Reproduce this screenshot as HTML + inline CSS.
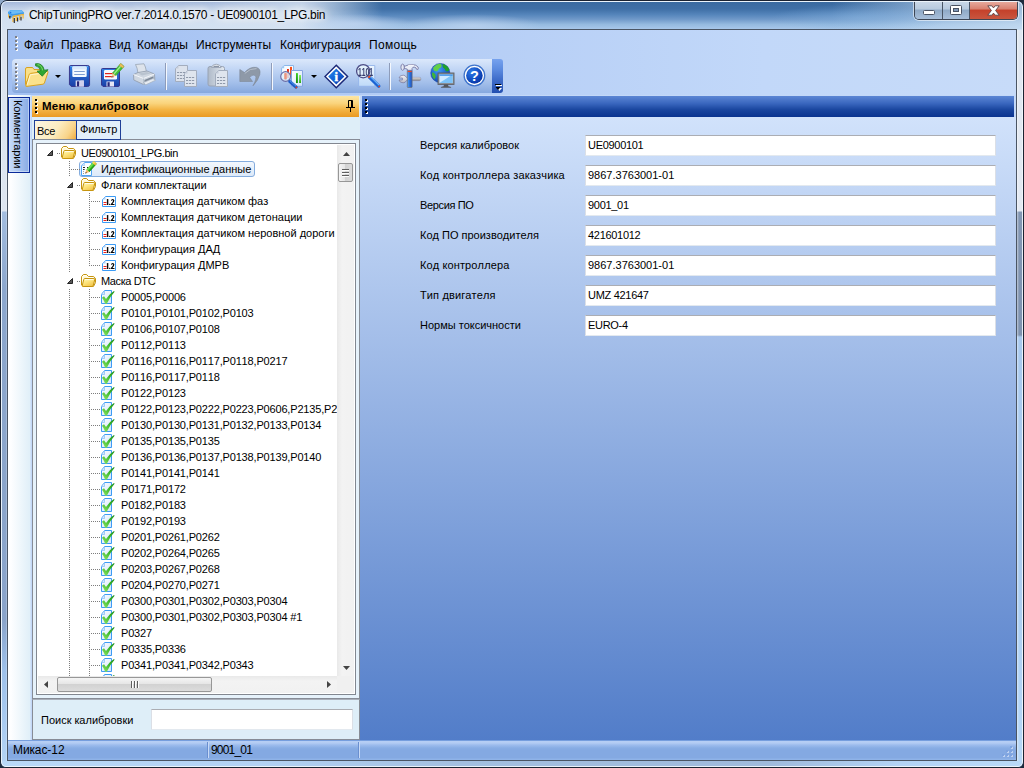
<!DOCTYPE html>
<html lang="ru">
<head>
<meta charset="utf-8">
<title>ChipTuningPRO ver.7.2014.0.1570 - UE0900101_LPG.bin</title>
<style>
*{box-sizing:border-box;margin:0;padding:0}
html,body{width:1024px;height:768px;overflow:hidden;background:#1d2a3d}
body{position:relative;font-kerning:none;font-family:"Liberation Sans","DejaVu Sans",sans-serif;font-size:11px;color:#000}
.abs{position:absolute}
#win{position:absolute;left:0;top:0;width:1024px;height:768px;border-radius:7px 7px 6px 6px;background:#a9c6ea;border:1px solid #1b2332;overflow:hidden}
#win:before{content:"";position:absolute;left:0;top:0;right:0;bottom:0;border:1px solid rgba(240,246,252,.92);border-radius:6px 6px 5px 5px;z-index:5;pointer-events:none}
#glass{position:absolute;left:1px;top:1px;width:1020px;height:28px;background:
 radial-gradient(ellipse 60px 10px at 352px 22px,rgba(190,212,240,.8),rgba(190,212,240,0)),
 radial-gradient(ellipse 70px 12px at 470px 24px,rgba(190,212,240,.75),rgba(190,212,240,0)),
 radial-gradient(ellipse 90px 14px at 860px 16px,rgba(130,175,220,.6),rgba(130,175,220,0)),
 linear-gradient(90deg,rgba(214,227,242,.96) 0,rgba(214,227,242,.95) 300px,rgba(214,227,242,.55) 335px,rgba(214,227,242,0) 380px),
 linear-gradient(90deg,rgba(190,215,240,0) 830px,rgba(190,215,240,.5) 915px,rgba(205,225,244,.7) 1020px),
 linear-gradient(180deg,#3a6aa0 0,#3f6fa6 25%,#5585bb 45%,#7099c9 62%,#95badf 80%,#a7c7ea 96%,#dce8f6 100%)}
#glassL{position:absolute;left:1px;top:1px;width:345px;height:10px;background:linear-gradient(180deg,rgba(150,172,212,.75),rgba(150,172,212,.45) 40%,rgba(150,172,212,0));-webkit-mask-image:linear-gradient(90deg,#000 0,#000 60%,transparent 100%);mask-image:linear-gradient(90deg,#000 0,#000 60%,transparent 100%)}
#cornTL{position:absolute;left:0;top:0;width:8px;height:8px;background:#8fa9c9}
#sideL{position:absolute;left:1px;top:29px;width:6px;height:731px;background:linear-gradient(90deg,rgba(255,255,255,0) 0,rgba(255,255,255,0) 4px,rgba(255,255,255,.45) 5px),linear-gradient(180deg,#dce4ef 0,#dde5f0 181px,#a3bddf 182px,#8ca7cd 260px,#8aa4ca 590px,#9dc0ea 640px,#b3d3f5 100%)}
#sideR{position:absolute;left:1016px;top:29px;width:6px;height:731px;background:linear-gradient(90deg,rgba(255,255,255,.5) 0,rgba(255,255,255,0) 2px),linear-gradient(180deg,#dfe7f1 0,#e3e9f2 181px,#8397b4 182px,#7f93b0 305px,#a9c9ee 307px,#aecff2 80%,#b7d7f7 100%)}
#botF{position:absolute;left:1px;top:760px;width:1020px;height:6px;background:linear-gradient(90deg,#b9d8f7,#b3d2f4 25%,#a3bfe0 45%,#9fbadc 75%,#b3d3f5 88%,#b9d9f8)}
#title{position:absolute;left:28px;top:6px;font-size:12px;letter-spacing:-.3px;line-height:16px;white-space:nowrap;color:#000;text-shadow:0 0 6px #fff,0 0 9px #fff,0 0 12px rgba(255,255,255,.9)}
#client{position:absolute;left:6px;top:28px;width:1010px;height:732px;border:1px solid #4a5564;background:#bdd2f4;overflow:hidden}
/* caption buttons */
#cap{position:absolute;left:913px;top:0;width:104px;height:19px;border:1px solid #3d4654;border-top:none;border-radius:0 0 5px 5px;overflow:hidden;box-shadow:0 0 0 1px rgba(255,255,255,.55)}
#cap div{position:absolute;top:0;height:18px}
#cmin{left:0;width:28px;background:linear-gradient(180deg,#cbd9e8 0%,#b7cade 45%,#8fa9c6 50%,#a9c0da 100%);border-right:1px solid #4a5666}
#cmax{left:28px;width:27px;background:linear-gradient(180deg,#cbd9e8 0%,#b7cade 45%,#8fa9c6 50%,#a9c0da 100%);border-right:1px solid #4a5666}
#ccls{left:55px;width:47px;background:linear-gradient(180deg,#e9aea2 0%,#d9806f 45%,#c4402a 50%,#c9563f 100%)}
/* menu */
#menu{position:absolute;left:0;top:0;width:1008px;height:29px;background:linear-gradient(90deg,#a2c0f2 0%,#b3ccf5 40%,#c2d8f9 75%,#c7dbf9 100%)}
#menu span{position:absolute;top:7px;font-size:12px;line-height:16px;white-space:nowrap;color:#000}
.grip{position:absolute;width:3px}
/* toolbar */
#tbrow{position:absolute;left:0;top:29px;width:1008px;height:36px;background:linear-gradient(90deg,#a2c0f2 0%,#b3ccf5 40%,#c2d8f9 75%,#c7dbf9 100%)}
#tb{position:absolute;left:4px;top:0px;width:483px;height:34px;border-radius:4px 0 0 4px;background:linear-gradient(180deg,#dbe8fb 0%,#c2d6f5 30%,#a3bfea 70%,#86a8de 100%)}
#tbend{position:absolute;left:484px;top:0;width:11px;height:34px;border-radius:0 3px 3px 0;background:linear-gradient(180deg,#76a2ee 0%,#5c8be0 30%,#3f6dca 60%,#234fb0 100%)}
.tsep{position:absolute;top:4px;width:2px;height:27px;border-left:1px solid #8e9cba;border-right:1px solid #f4f8fe}
.ti{position:absolute;top:5px;width:24px;height:24px}
.dd{position:absolute;width:0;height:0;border-left:3px solid transparent;border-right:3px solid transparent;border-top:3px solid #000}
/* dock */
#dock{position:absolute;left:0;top:65px;width:1008px;height:645px;background:#c3d8f8}
#lstrip{position:absolute;left:0;top:0;width:24px;height:645px;background:linear-gradient(90deg,#ffffff 0,#fdfeff 3px,#e0eff8 22px,#c3d8f8 23px,#c3d8f8 24px)}
#ctab{position:absolute;left:0px;top:2px;width:22px;height:76px;border:1px solid #0a2a9a;background:linear-gradient(90deg,#c9dcf8,#a9c4ee 50%,#88abe4);box-shadow:inset 0 0 0 1px rgba(225,236,252,.55)}
#ctab span{position:absolute;left:16px;top:2px;font-size:11px;white-space:nowrap;transform-origin:0 0;transform:rotate(90deg);line-height:14px;letter-spacing:-.1px}
#panel{position:absolute;left:24px;top:1px;width:328px;height:644px;background:#deeef8}
#phead{position:absolute;left:0;top:0;width:327px;height:21px;background:linear-gradient(180deg,#fce6a4 0%,#fad47c 35%,#f3b444 65%,#ea9a22 100%)}
#phead b{position:absolute;left:10px;top:3px;font-size:11.5px;line-height:14px;white-space:nowrap;font-weight:bold;letter-spacing:.22px}
#rhead{position:absolute;left:354px;top:1px;width:652px;height:21px;background:linear-gradient(180deg,#5c86d4 0%,#3a67bf 35%,#1a469f 65%,#0a3390 100%)}
#main{position:absolute;left:352px;top:22px;width:656px;height:623px;background:linear-gradient(180deg,#d1e2fb 0%,#527dc9 100%)}
.lbl{position:absolute;left:60px;font-size:11px;line-height:14px;white-space:nowrap}
.inp{position:absolute;left:225px;width:411px;height:21px;border:1px solid #dbdfe6;border-top-color:#abadb3;border-bottom-color:#e3e9ef;background:#fff;font-size:11px;line-height:14px;padding:2px 0 0 2px;white-space:nowrap;letter-spacing:-.3px}
/* tabs */
.tab{position:absolute;top:24px;height:20px;border:1px solid #1f3f97;font-size:11px;line-height:14px}
/* tree */
#tpage{position:absolute;left:0px;top:43px;width:328px;height:560px;border:1px solid #878c96;background:#e6f2fb}
#tbox{position:absolute;left:3px;top:3px;width:320px;height:552px;border:1px solid #828790;background:#fff;overflow:hidden}
#tree{position:absolute;left:0px;top:1px;width:300px;height:531px;overflow:hidden}
.row{position:absolute;left:0;width:420px;height:16px}
.tx{position:absolute;top:1px;font-size:11px;line-height:14px;white-space:nowrap}
.lt{letter-spacing:-.17px}
.lt2{letter-spacing:-.42px}
.lt3{letter-spacing:-.35px}
.ic{position:absolute;top:0;overflow:visible}
.arr{position:absolute;top:5px}
.hd{position:absolute;top:8px;height:1px;background-image:linear-gradient(90deg,#7d7d7d 50%,transparent 50%);background-size:2px 1px}
.vd{position:absolute;width:1px;background-image:linear-gradient(180deg,#7d7d7d 50%,transparent 50%);background-size:1px 2px}
.sel{position:absolute;top:0;width:176px;height:16px;border:1px solid #84acdd;border-radius:3px;background:linear-gradient(180deg,#f2f7fd,#dce9f9)}
/* scrollbars */
#vsb{position:absolute;left:300px;top:1px;width:17px;height:531px;background:linear-gradient(90deg,#e9e9e9,#f3f3f3 30%,#f1f1f1)}
#scorner{position:absolute;left:300px;top:532px;width:17px;height:17px;background:#f0f0f0}
#hsb{position:absolute;left:1px;top:532px;width:299px;height:17px;background:linear-gradient(180deg,#e9e9e9,#f3f3f3 30%,#f1f1f1)}
.thumb{position:absolute;border:1px solid #979797;border-radius:2px;background:linear-gradient(90deg,#f5f5f5,#e4e4e4 50%,#d2d2d2 50%,#dcdcdc)}
.thumbh{position:absolute;border:1px solid #979797;border-radius:2px;background:linear-gradient(180deg,#f5f5f5,#e4e4e4 50%,#d2d2d2 50%,#dcdcdc)}
/* search */
#search{position:absolute;left:0;top:603px;width:328px;height:41px;border:1px solid #878c96;border-top-color:#a9afba;background:#deeef8}
#search span{position:absolute;left:8px;top:13px;font-size:11px;line-height:14px;white-space:nowrap}
#search i{position:absolute;left:118px;top:9px;width:202px;height:21px;border:1px solid #dbdfe6;border-top-color:#abadb3;border-bottom-color:#e3e9ef;background:#fff}
/* status */
#status{position:absolute;left:0;top:710px;width:1008px;height:20px;background:linear-gradient(180deg,#769ede 0,#769ede 1px,#b7cff4 1px,#b3ccf3 3px,#9dbced 5px,#88ade4 8px,#84a9e2 10px,#84a9e2 18px,#8fb3e8 19px)}
#status span{position:absolute;top:3px;font-size:12px;line-height:14px;white-space:nowrap}
.ssep{position:absolute;top:2px;width:2px;height:16px;border-left:1px solid #6a8fd0;border-right:1px solid #c8daf6}
</style>
</head>
<body>
<svg width="0" height="0" style="position:absolute">
<defs>
<linearGradient id="gFold" x1="0" y1="0" x2=".7" y2="1"><stop offset="0" stop-color="#fffab8"/><stop offset=".5" stop-color="#fde47c"/><stop offset="1" stop-color="#f2c44a"/></linearGradient>
<linearGradient id="gPage" x1="0" y1="0" x2="1" y2="1"><stop offset="0" stop-color="#ffffff"/><stop offset="1" stop-color="#cfe3fb"/></linearGradient>
<linearGradient id="gGreen" x1="1" y1="0" x2=".2" y2="1"><stop offset="0" stop-color="#1d8c18"/><stop offset=".5" stop-color="#3dba2e"/><stop offset="1" stop-color="#86e060"/></linearGradient>
<linearGradient id="gBlue" x1="0" y1="0" x2="0" y2="1"><stop offset="0" stop-color="#2f7fe6"/><stop offset="1" stop-color="#1b3fa6"/></linearGradient>
<linearGradient id="gGrey" x1="0" y1="0" x2="0" y2="1"><stop offset="0" stop-color="#dfe6ee"/><stop offset="1" stop-color="#a9b5c4"/></linearGradient>
<linearGradient id="gGrey2" x1="0" y1="0" x2="1" y2="0"><stop offset="0" stop-color="#aeb9c8"/><stop offset="1" stop-color="#e3e9f0"/></linearGradient>
<radialGradient id="gHelp" cx=".35" cy=".3" r=".85"><stop offset="0" stop-color="#2f7ae6"/><stop offset=".6" stop-color="#0f4abe"/><stop offset="1" stop-color="#082c98"/></radialGradient>
<radialGradient id="gGlobe" cx=".4" cy=".35" r=".75"><stop offset="0" stop-color="#3f9af2"/><stop offset="1" stop-color="#0a3cae"/></radialGradient>
<linearGradient id="gWr" x1="0" y1="0" x2="0" y2="1"><stop offset="0" stop-color="#f4f4f8"/><stop offset="1" stop-color="#b9b9c4"/></linearGradient>
<linearGradient id="gWs" x1="0" y1="0" x2="0" y2="1"><stop offset="0" stop-color="#dedede"/><stop offset="1" stop-color="#8a8a8a"/></linearGradient>
<linearGradient id="gHd" x1="0" y1="0" x2="1" y2="0"><stop offset="0" stop-color="#5aa8f5"/><stop offset=".45" stop-color="#2f78e0"/><stop offset="1" stop-color="#1a4cba"/></linearGradient>
<linearGradient id="gBarG" x1="0" y1="0" x2="0" y2="1"><stop offset="0" stop-color="#3fd024"/><stop offset="1" stop-color="#16880e"/></linearGradient>
<linearGradient id="gBarG2" x1="0" y1="0" x2="0" y2="1"><stop offset="0" stop-color="#8af060"/><stop offset="1" stop-color="#2aa81a"/></linearGradient>
<linearGradient id="gPgM" x1="0" y1="0" x2="0" y2="1"><stop offset="0" stop-color="#edf6ff"/><stop offset="1" stop-color="#bfdaf8"/></linearGradient>
<linearGradient id="gInfo" x1="0" y1="0" x2="1" y2="1"><stop offset="0" stop-color="#2a8cf0"/><stop offset=".5" stop-color="#1462d4"/><stop offset="1" stop-color="#0a34a4"/></linearGradient>
<symbol id="i-folder" viewBox="0 0 16 16">
 <path d="M1.5 12 V3.6 L3.4 1.5 H6.6 L8.4 3.5 H13.6 L15.5 5.4 V9.5 L13.5 13.4 H3Z" fill="#fff7d2" stroke="#c6940e" stroke-width="1" stroke-linejoin="round"/>
 <path d="M2.5 11 V4.2 L3.8 2.6 H6.2 L7.9 4.5 H13.2" fill="none" stroke="#fffef6" stroke-width="1"/>
 <path d="M4.8 5.5 H13.9 Q15 5.5 14.7 6.6 L13.4 12.3 Q13.1 13.5 11.9 13.5 H3.3 Q1.9 13.5 2.3 12.2 L3.7 6.6 Q4 5.5 4.8 5.5Z" fill="url(#gFold)" stroke="#c6940e" stroke-width="1"/>
 <path d="M4.8 6.6 H13.6" stroke="#fffdf0" stroke-width="1"/>
</symbol>
<symbol id="i-edit" viewBox="0 0 16 16" overflow="visible">
 <path d="M4.5 1.5 H11.5 V14.5 H1.5 V4.5 Z" fill="#fbfdff" stroke="#4ea4f4" stroke-width="1"/>
 <path d="M1.5 4.5 H4.5 V1.5 Z" fill="#cfe4fb" stroke="#8cc0f6" stroke-width=".6"/>
 <rect x="3" y="6" width="2" height="1" fill="#222"/><rect x="7" y="6" width="1.4" height="1" fill="#222"/><rect x="3" y="8" width="1.6" height="1" fill="#333"/><rect x="3" y="10" width="1" height="1" fill="#aaa"/><rect x="3" y="12" width="1" height="1" fill="#999"/>
 <path d="M13.9 0.2 L16.7 2.8 L9.3 10.9 L6.5 8.4Z" fill="#35b524"/>
 <path d="M13.2 1.0 L14.6 2.2 L7.9 9.7 L6.5 8.4Z" fill="#6fe050"/>
 <path d="M15.7 3.2 L16.7 2.8 L9.3 10.9 L8.6 10.3Z" fill="#1c8a14"/>
 <path d="M13.9 0.2 L16.7 2.8 L15.2 4.4 L12.4 1.8Z" fill="#f2b83c"/>
 <path d="M13.9 0.2 L15.3 1.5 L13.8 3.1 L12.4 1.8Z" fill="#f7dc5a"/>
 <path d="M6.5 8.4 L9.3 10.9 L5.2 12.6Z" fill="#f8b868"/>
 <path d="M5.2 12.6 L6.9 11.9 L5.9 10.9Z" fill="#222"/>
</symbol>
<symbol id="i-num" viewBox="0 0 16 16">
 <path d="M3.5 3.5 H13.5 V13.5 H0.5 V6.5 Z" fill="#fff" stroke="#3c9bf5" stroke-width="1"/>
 <path d="M0.5 6.5 H3.5 V3.5 Z" fill="#a9d0fa"/>
 <rect x="1.5" y="9" width="3" height="1" fill="#e8201a"/><rect x="1.5" y="11" width="3" height="1" fill="#e8201a"/>
 <rect x="4.9" y="6" width="1.4" height="6.1" rx=".4" fill="#080808"/>
 <rect x="7.1" y="10.8" width="1.3" height="1.3" rx=".4" fill="#080808"/>
 <path d="M9 7.7 Q9.1 6 10.7 6 Q12.4 6 12.4 7.6 Q12.4 8.8 10.5 10.9 H12.5 V12.1 H8.9 V11 Q11.1 8.6 11.1 7.7 Q11.1 7.1 10.7 7.1 Q10.2 7.1 10.2 7.7Z" fill="#080808"/>
</symbol>
<symbol id="i-chk" viewBox="0 0 16 16" overflow="visible">
 <path d="M3.5 1.5 H10.5 V14.5 H0.5 V5.5 Z" fill="url(#gPage)" stroke="#3c9bf5" stroke-width="1"/>
 <path d="M0.5 5.5 H3.5 V1.5 Z" fill="#dcecfd" stroke="#7fbcf8" stroke-width=".7"/>
 <path d="M0.9 8.7 L3 7.2 L5 10 Q8.2 4.8 13 2 L13.6 2.8 Q9 7.8 5.8 14.8 L4.2 14.8 Q3 11 0.9 8.7Z" fill="url(#gGreen)"/>
</symbol>
</defs>
</svg>
<div id="cornTL"></div>
<div id="win">
 <div id="glass"></div><div id="glassL"></div>
 <div id="sideL"></div><div id="sideR"></div><div id="botF"></div>
 <svg class="abs" style="left:7px;top:7px" width="17" height="16" viewBox="0 0 17 16">
  <path d="M0 4 L2.4 2 H13.4 L16 4.4 V6 L4.6 8 L0 5.4Z" fill="#3c9aec"/>
  <path d="M0.3 4 L2.5 2.2 H13.2 L15.4 4.2 L4.6 6.2Z" fill="#6cbcf6"/>
  <path d="M0 5.2 L4.6 7.8 V10.2 L0 7.4Z" fill="#4aa2ee"/>
  <circle cx="2.6" cy="4.5" r=".8" fill="#1f6fe0"/>
  <path d="M4.6 7.8 L16 5.8 V7 L4.6 9.4Z" fill="#e8b23c"/>
  <path d="M0 6.2 H1.1 V9.4 H0Z M4.3 9 H5.7 V14 H4.3Z M7.6 8.4 H9 V13 H7.6Z M11 7.8 H12.4 V12 H11Z M14.4 7 H15.8 V10.6 H14.4Z" fill="#f3bc45"/>
  <path d="M1.1 8 H2.6 V10.4 H1.1Z M5.7 10 H6.9 V15 H5.7Z M9 9.6 H10.2 V13.6 H9Z M12.4 8.8 H13.6 V12.6 H12.4Z" fill="#2e2e34"/>
 </svg>
 <div id="title">ChipTuningPRO ver.7.2014.0.1570 - UE0900101_LPG.bin</div>
 <div id="cap">
  <div id="cmin"><svg class="abs" style="left:8px;top:9px" width="13" height="6"><rect x=".5" y=".5" width="11" height="4" rx="1" fill="#fff" stroke="#4a5363"/></svg></div>
  <div id="cmax"><svg class="abs" style="left:7px;top:4px" width="13" height="11"><rect x=".5" y=".5" width="11" height="9" rx="1" fill="#fff" stroke="#4a5363"/><rect x="3.5" y="3.5" width="5" height="3" fill="#7f98b8" stroke="#4a5363"/></svg></div>
  <div id="ccls"><svg class="abs" style="left:17px;top:4px" width="13" height="11" viewBox="0 0 13 11"><path d="M0.8 0.8 H4.8 L6.5 2.9 L8.2 0.8 H12.2 L8.6 5.5 L12.2 10.2 H8.2 L6.5 8.1 L4.8 10.2 H0.8 L4.4 5.5Z" fill="#fff" stroke="#5a4246" stroke-width=".9"/></svg></div>
 </div>
 <div id="client">
  <div id="menu">
   <svg class="abs" style="left:7px;top:6px" width="3" height="16"><g fill="#fff"><rect x="1" y="1" width="2" height="2"/><rect x="1" y="5" width="2" height="2"/><rect x="1" y="9" width="2" height="2"/><rect x="1" y="13" width="2" height="2"/></g><g fill="#7d7f86"><rect x="0" y="0" width="2" height="2"/><rect x="0" y="4" width="2" height="2"/><rect x="0" y="8" width="2" height="2"/><rect x="0" y="12" width="2" height="2"/></g></svg>
   <span style="left:16px">Файл</span><span style="left:53px">Правка</span><span style="left:101px">Вид</span><span style="left:129px">Команды</span><span style="left:188px">Инструменты</span><span style="left:272px">Конфигурация</span><span style="left:361px;letter-spacing:.3px">Помощь</span>
  </div>
  <div id="tbrow">
   <div id="tb">
    <svg class="abs" style="left:3px;top:4px" width="3" height="28"><g fill="#fff"><rect x="1" y="1" width="2" height="2"/><rect x="1" y="5" width="2" height="2"/><rect x="1" y="9" width="2" height="2"/><rect x="1" y="13" width="2" height="2"/><rect x="1" y="17" width="2" height="2"/><rect x="1" y="21" width="2" height="2"/><rect x="1" y="25" width="2" height="2"/></g><g fill="#7d7f86"><rect x="0" y="0" width="2" height="2"/><rect x="0" y="4" width="2" height="2"/><rect x="0" y="8" width="2" height="2"/><rect x="0" y="12" width="2" height="2"/><rect x="0" y="16" width="2" height="2"/><rect x="0" y="20" width="2" height="2"/><rect x="0" y="24" width="2" height="2"/></g></svg>
    <svg class="abs" style="left:13px;top:4px" width="24" height="24" viewBox="0 0 24 24">
 <path d="M0.5 21.5 V6 Q0.5 4.5 2 4.5 H7 Q8 4.5 8.6 5.6 L9 6.5 H14 Q15.5 6.5 15.5 8 V12 L4 14Z" fill="#f9e08a" stroke="#d7a224" stroke-width="1"/>
 <path d="M0.8 23 L4.2 11.6 Q4.5 10.6 5.6 10.4 L22 8.2 Q23.3 8.1 23 9.3 L19.4 20 Q19 21 18 21.2 L1.8 23.4 Q0.6 23.6 0.8 23Z" fill="#fbe28c" stroke="#d9a21f" stroke-width="1"/>
 <path d="M2.2 21.8 L5.3 11.8 L21.6 9.6" fill="none" stroke="#fff6cf" stroke-width="1"/>
 <path d="M10.5 0.8 Q17.5 -0.5 19.3 7.2 L23 6.7 L17.3 13.2 L12 8.2 L15.6 7.7 Q14.6 3.5 10.5 2.8Z" fill="#2fa632" stroke="#1f7f28" stroke-width=".8"/>
 <path d="M12.5 1.6 Q16.8 2 17.6 7.4" fill="none" stroke="#7ddc6a" stroke-width="1"/>
</svg>
<i class="dd" style="left:43px;top:16px"></i>
<svg class="abs" style="left:56px;top:4px" width="23" height="24" viewBox="0 0 24 24" preserveAspectRatio="none">
 <path d="M2.8 2.5 H20.5 Q22.5 2.5 22.5 4.5 V21.5 Q22.5 23.5 20.5 23.5 H3.5 L1.5 21.5 V3.8 Q1.5 2.5 2.8 2.5Z" fill="url(#gBlue)" stroke="#38388c" stroke-width="1"/>
 <path d="M2.5 3.5 H21" stroke="#5aa6f2" stroke-width="1"/>
 <rect x="4.5" y="3.5" width="15" height="10.5" rx="1.3" fill="#f4f9ff"/>
 <rect x="4.5" y="3.5" width="15" height="3" rx="1.3" fill="#d9e9fb"/>
 <rect x="6.5" y="8" width="11" height="1" fill="#7f9dd0"/><rect x="6.5" y="11" width="11" height="1" fill="#7f9dd0"/>
 <rect x="8" y="17.5" width="8.5" height="6" fill="#e6e6f6"/>
 <rect x="9.3" y="18.3" width="2.4" height="5" fill="#27277a"/>
 <path d="M13 17.5 H16.5 V23.5 H11.8Z" fill="#d0d0ee"/>
</svg>
<svg class="abs" style="left:88px;top:4px" width="25" height="24" viewBox="0 0 25 24">
 <path d="M2.5 5.5 H18 Q19.5 5.5 19.5 7 V22 Q19.5 23.5 18 23.5 H3 L1.5 22 V6.5 Q1.5 5.5 2.5 5.5Z" fill="url(#gBlue)" stroke="#38388c" stroke-width="1"/>
 <rect x="4" y="7" width="13" height="9.5" rx="1.2" fill="#f7faff"/>
 <rect x="5" y="10" width="9" height="1.2" fill="#e0251b"/><rect x="5" y="13" width="9" height="1.2" fill="#e0251b"/>
 <rect x="6.5" y="18.5" width="7.5" height="5" fill="#e6e6f6"/>
 <rect x="7.5" y="19.2" width="2.2" height="4.3" fill="#27277a"/>
 <path d="M20.7 0.6 L24 3.4 L15.8 12.8 L12.5 10Z" fill="#46c038" stroke="#2d9426" stroke-width=".6"/>
 <path d="M21.7 2 L14 10.8" stroke="#a5ee93" stroke-width="1.2"/>
 <path d="M20.7 0.6 L24 3.4 L22.6 5 L19.3 2.2Z" fill="#f0c060" stroke="#c9962e" stroke-width=".5"/>
 <path d="M12.5 10 L15.8 12.8 L11.4 14.4Z" fill="#f3c98a"/>
 <path d="M11.4 14.4 L13 13.9 L12 12.9Z" fill="#333"/>
</svg>
<svg class="abs" style="left:120px;top:4px" width="24" height="24" viewBox="0 0 24 24">
 <path d="M3.5 1.5 L12 0.8 Q13.5 3 14.5 9 L6 10.5 Q5.5 5 3.5 1.5Z" fill="#dde3eb" stroke="#98a4b4" stroke-width=".8"/>
 <path d="M1.5 11.5 L6 9.5 L15 8 L22.5 11 L22.8 16.5 L11.5 21.5 L1.8 17Z" fill="#cfd7e1" stroke="#8f9bab" stroke-width=".8"/>
 <path d="M1.5 11.5 L11.5 15.5 L22.5 11" fill="none" stroke="#f3f6fa" stroke-width="1"/>
 <path d="M6.5 10.6 L15 9 L18.5 10.5 L10 12.4Z" fill="#b9c3cf"/>
 <path d="M11.5 15.5 V21.5" stroke="#b4bfcc" stroke-width=".8"/>
 <path d="M12.5 17 L21.5 13.2 V15.5 L12.5 19.5Z" fill="#7d8896"/>
 <path d="M11.5 19.5 L21 15.5 L23.6 17.2 L13.8 21.8Z" fill="#e6ebf1" stroke="#a5b0be" stroke-width=".7"/>
</svg>
<i class="tsep" style="left:153px"></i>
<svg class="abs" style="left:162px;top:4px" width="24" height="24" viewBox="0 0 24 24">
 <path d="M4.5 2.5 H13.5 V18.5 H1.5 V5.5Z" fill="#dce2ec" stroke="#a3adbe" stroke-width="1"/>
 <path d="M1.5 5.5 H4.5 V2.5Z" fill="#c3ccd9"/>
 <g><path d="M3 9.5 h8" stroke="#8f99aa" stroke-width="1" stroke-dasharray="2.2 .8" fill="none"/><path d="M3 12.5 h8" stroke="#8f99aa" stroke-width="1" stroke-dasharray="2.2 .8" fill="none"/><path d="M3 15.5 h8" stroke="#8f99aa" stroke-width="1" stroke-dasharray="2.2 .8" fill="none"/></g>
 <path d="M13.5 7.5 H22.5 V23.5 H10.5 V10.5Z" fill="#dfe5ee" stroke="#a3adbe" stroke-width="1"/>
 <path d="M10.5 10.5 H13.5 V7.5Z" fill="#c3ccd9"/>
 <g><path d="M12 14.5 h9" stroke="#8f99aa" stroke-width="1" stroke-dasharray="2.2 .8" fill="none"/><path d="M12 17.5 h9" stroke="#8f99aa" stroke-width="1" stroke-dasharray="2.2 .8" fill="none"/><path d="M12 20.5 h9" stroke="#8f99aa" stroke-width="1" stroke-dasharray="2.2 .8" fill="none"/></g>
</svg>
<svg class="abs" style="left:194px;top:4px" width="24" height="24" viewBox="0 0 24 24">
 <path d="M4 3.5 H16.5 Q18.5 3.5 18.5 5.5 V21 Q18.5 23 16.5 23 H4 Q2 23 2 21 V5.5 Q2 3.5 4 3.5Z" fill="url(#gGrey2)" stroke="#98a3b4" stroke-width="1"/>
 <path d="M5.5 4.5 Q6 1.5 10.2 1.2 Q14.5 1.5 15 4.5Z" fill="#eef2f6" stroke="#98a3b4" stroke-width=".9"/>
 <rect x="7.5" y="2.8" width="5.5" height="1.2" fill="#8a94a4"/>
 <path d="M12.5 7.5 H21.5 V23.5 H9.5 V10.5Z" fill="#dfe5ee" stroke="#a3adbd" stroke-width="1"/>
 <path d="M9.5 10.5 H12.5 V7.5Z" fill="#c3ccd9"/>
 <g><path d="M11 14.5 h9" stroke="#8f99aa" stroke-width="1" stroke-dasharray="2.2 .8" fill="none"/><path d="M11 17.5 h9" stroke="#8f99aa" stroke-width="1" stroke-dasharray="2.2 .8" fill="none"/><path d="M11 20.5 h9" stroke="#8f99aa" stroke-width="1" stroke-dasharray="2.2 .8" fill="none"/></g>
</svg>
<svg class="abs" style="left:226px;top:4px" width="24" height="24" viewBox="0 0 24 24">
 <path d="M1.8 6.5 L6.5 9.5 Q12 3.5 18.5 4.4 Q23 5.6 21.8 11.5 Q20.5 17 15 22.8 Q19 15.5 17.5 12.8 Q15.5 10.6 11.5 14.2 L14.5 18.5 L1.8 18.5Z" fill="#8e99a8" stroke="#7d8897" stroke-width=".6"/>
 <path d="M6.8 10.4 Q12 5 18.5 5.6" fill="none" stroke="#b7c0cc" stroke-width="1"/>
</svg>
<i class="tsep" style="left:259px"></i>
<svg class="abs" style="left:267px;top:4px" width="25" height="26" viewBox="0 0 25 26">
 <path d="M5.2 2.5 H14.5 V16 H2.6 V5.2Z" fill="#f7fbff" stroke="#8ab6ea" stroke-width="1"/>
 <path d="M2.6 5.2 H5.2 V2.5Z" fill="#9cc8f4"/>
 <rect x="8" y="6" width="1.9" height="9" fill="#f02808"/><rect x="11" y="3.9" width="2" height="10.4" fill="#f4501c"/>
 <path d="M12.5 7.5 H23.5 V23.3 H12.5Z" fill="url(#gPage)" stroke="#86a4e2" stroke-width="1"/>
 <rect x="17" y="10.1" width="1.9" height="9.9" fill="url(#gBarG)"/><rect x="20.1" y="12" width="1.9" height="8" fill="url(#gBarG2)"/>
 <circle cx="6.6" cy="13.5" r="4.9" fill="rgba(226,240,250,.82)" stroke="#6c6ca4" stroke-width="1.1"/>
 <rect x="5.2" y="10" width="2.6" height="6.4" rx=".8" fill="rgba(236,120,90,.75)"/>
 <path d="M10.9 18.6 L17 24" stroke="#1c5cc8" stroke-width="3.2" stroke-linecap="round"/>
 <path d="M11.4 18.2 L17.2 23.4" stroke="#5a9cf0" stroke-width="1" stroke-linecap="round" stroke-dasharray="1.2 .8"/>
 <circle cx="17.4" cy="24.4" r=".9" fill="#e8401c"/>
</svg>
<i class="dd" style="left:299px;top:16px"></i>
<svg class="abs" style="left:312px;top:4.5px" width="24.5" height="25" viewBox="0 0 26 26">
 <path d="M13 1 L25 13 L13 25 L1 13Z" fill="#fff" stroke="#1a2878" stroke-width="1.6" stroke-linejoin="miter"/>
 <path d="M13 4.4 L21.6 13 L13 21.6 L4.4 13Z" fill="url(#gInfo)"/>
 <text x="13" y="18" text-anchor="middle" style="font-family:'Liberation Serif',serif;font-weight:bold;font-size:13.5px" fill="#fff" stroke="#fff" stroke-width=".5">i</text>
</svg>
<svg class="abs" style="left:344px;top:4px" width="26" height="25" viewBox="0 0 26 25">
 <path d="M2.6 2.5 H18.8 V23.3 H2.6Z" fill="url(#gPgM)" stroke="#93b4ea" stroke-width=".9"/>
 <circle cx="7.2" cy="8.2" r="6.6" fill="rgba(226,241,252,.9)" stroke="#4e4e86" stroke-width="1.3"/>
 <path d="M13.6 14.2 L22.6 23" stroke="#1c64d4" stroke-width="3.6" stroke-linecap="round"/>
 <path d="M14.4 13.6 L23 22" stroke="#6ab0f6" stroke-width="1.1" stroke-linecap="round"/>
 <path d="M12.6 13.2 L13.9 14.5" stroke="#f0501c" stroke-width="2.6" stroke-linecap="butt"/>
 <circle cx="23.2" cy="23.4" r=".9" fill="#e8401c"/>
</svg>
<span class="abs" style="left:346.4px;top:9px;font-size:10px;line-height:10px;font-weight:bold;color:#363c6c;white-space:nowrap;display:inline-block;transform-origin:0 50%;transform:scaleX(.68)">1101</span>
<i class="tsep" style="left:377px"></i>
<svg class="abs" style="left:386px;top:4px" width="24" height="25" viewBox="0 0 24 25">
 <path d="M5.2 12.2 Q1.6 12.2 1 15 H4.4 V17 H1 Q1.6 19.8 5.2 19.8 Q7.4 19.8 8.4 17.6 H21.4 Q22.8 17.6 22.8 16 Q22.8 14.4 21.4 14.4 H8.4 Q7.4 12.2 5.2 12.2Z" fill="url(#gWr)" stroke="#77779c" stroke-width=".7"/>
 <path d="M9 14.4 H21.4 Q22.8 14.4 22.8 16 Q22.8 17.6 21.4 17.6 H9Z" fill="url(#gWs)"/>
 <rect x="9.3" y="7" width="4.8" height="17.6" rx=".8" fill="url(#gHd)" stroke="#6c747c" stroke-width=".8"/>
 <rect x="9.7" y="7.8" width="4" height="1.3" fill="#f0481e"/>
 <path d="M6.2 3 Q7.8 3.2 9 2.4 Q11 1.3 14 1.5 Q18.6 1.7 20 4 Q20.7 5.2 20 6.4 L18.5 6.2 Q18.6 4.5 16.2 4.1 Q14.6 4 14.1 5.4 L14.1 7.3 H9.3 L9.3 6.2 Q7.8 5.4 6.2 5.6Z" fill="#e9edf8" stroke="#6c6c9a" stroke-width=".8"/>
 <ellipse cx="4.6" cy="4.2" rx="1.7" ry="3.1" fill="#e4e8f4" stroke="#6c6c9c" stroke-width=".8"/>
 <path d="M10 2.4 Q13 1.8 16 2.4" stroke="#fff" stroke-width=".8" fill="none"/>
</svg>
<svg class="abs" style="left:418px;top:4px" width="26" height="26" viewBox="0 0 26 26">
 <circle cx="10.3" cy="10" r="9.6" fill="url(#gGlobe)" stroke="#0f3a9a" stroke-width=".5"/>
 <path d="M3.4 4.2 Q6.5 1 10.5 0.6 Q12.6 2.4 11 4.4 Q8.6 5 8 7.4 Q6 9.2 4 7.6 Q2.6 6 3.4 4.2Z" fill="#62d048"/>
 <path d="M12.8 1 Q17.5 2 19.4 6.6 Q18.2 9.4 15.6 8 Q15.5 5.4 13 4.4 Q12.2 2.6 12.8 1Z" fill="#1f9f2c"/>
 <path d="M2 9.6 Q4.4 9.6 5.6 12 Q6.2 14.6 4.4 16.4 Q1.6 13.6 2 9.6Z" fill="#3fb53a"/>
 <rect x="8" y="10" width="16" height="11.4" fill="#8d9095" stroke="#5c5f64" stroke-width=".9"/>
 <rect x="9.4" y="11.4" width="13.2" height="8.6" fill="#cfe9ff"/>
 <path d="M9.4 20 L22.6 11.4 V20Z" fill="#7cc2f8"/>
 <rect x="9.4" y="11.4" width="13.2" height="1.4" fill="#3a92ea"/>
 <path d="M14 21.6 H18 L18.4 23.2 Q21 23.4 21.4 24.8 H10.6 Q11 23.4 13.6 23.2Z" fill="#55585e"/>
</svg>
<svg class="abs" style="left:451px;top:5.3px" width="24" height="24" viewBox="0 0 24 24">
 <circle cx="11.4" cy="11.5" r="10.3" fill="#fff" stroke="#3f74cc" stroke-width="1.3"/>
 <circle cx="11.4" cy="11.5" r="8.3" fill="url(#gHelp)"/>
 <text x="11.4" y="16.8" text-anchor="middle" style="font-family:'Liberation Sans',sans-serif;font-weight:bold;font-size:14.5px" fill="#fff">?</text>
</svg>

   </div>
   <div id="tbend"><svg class="abs" style="left:2px;top:25px" width="8" height="8" viewBox="0 0 8 8"><rect x="2" y="1" width="6" height="1" fill="#fff"/><path d="M3 4 H8 L5.5 7Z" fill="#fff"/><rect x="1" y="0" width="6" height="1" fill="#000"/><path d="M1.5 3 H6.5 L4 6Z" fill="#000"/></svg></div>
  </div>
  <div id="dock">
   <div id="lstrip"><div id="ctab"><span>Комментарии</span></div></div>
   <div id="panel">
    <div id="phead"><svg class="abs" style="left:3px;top:3px" width="3" height="16"><g fill="#fff"><rect x="1" y="1" width="2" height="2"/><rect x="1" y="5" width="2" height="2"/><rect x="1" y="9" width="2" height="2"/><rect x="1" y="13" width="2" height="2"/></g><g fill="#000"><rect x="0" y="0" width="2" height="2"/><rect x="0" y="4" width="2" height="2"/><rect x="0" y="8" width="2" height="2"/><rect x="0" y="12" width="2" height="2"/></g></svg><b>Меню калибровок</b>
     <svg class="abs" style="left:313px;top:3px" width="11" height="14" viewBox="0 0 11 14"><path d="M3.5 8.5 V1.5 H7.5 V8.5 M6.5 1.5 V8.5 M1 8.5 H10 M5.5 8.5 V13" fill="none" stroke="#000" stroke-width="1"/></svg>
    </div>
    <div class="tab" style="left:2px;width:43px;border-bottom:none;background:linear-gradient(125deg,#fdf7e4 0%,#fcecc0 50%,#f9d48a 78%,#f0aa3c 100%);padding:3px 0 0 2px;letter-spacing:-.3px">Все</div>
    <div class="tab" style="left:44px;width:45px;background:#e2eefa;padding:1px 0 0 3px;z-index:2;letter-spacing:-.1px">Фильтр</div>
    <div id="tpage">
     <div id="tbox">
      <div id="tree">
       <i class="vd" style="left:32px;top:16px;height:15px"></i>
       <i class="vd" style="left:32px;top:48px;height:79px"></i>
       <i class="vd" style="left:32px;top:144px;height:387px"></i>
       <i class="vd" style="left:52px;top:48px;height:73px"></i>
       <i class="vd" style="left:52px;top:144px;height:387px"></i>
       <div class="row" style="top:0px"><svg class="arr" style="left:10px" width="6" height="6" viewBox="0 0 6 6"><path d="M5.5 0.5 L5.5 5.5 L0.5 5.5 Z" fill="#595959" stroke="#262626" stroke-width="1" stroke-linejoin="miter"/></svg><i class="hd" style="left:20px;width:3px"></i><svg class="ic" style="left:23px" width="16" height="16" viewBox="0 0 16 16"><use href="#i-folder"/></svg><span class="tx lt2" style="left:44px">UE0900101_LPG.bin</span></div>
<div class="row" style="top:16px"><span class="sel" style="left:42px"></span><i class="hd" style="left:32px;width:11px"></i><svg class="ic" style="left:43px" width="16" height="16" viewBox="0 0 16 16"><use href="#i-edit"/></svg><span class="tx" style="left:64px">Идентификационные данные</span></div>
<div class="row" style="top:32px"><svg class="arr" style="left:30px" width="6" height="6" viewBox="0 0 6 6"><path d="M5.5 0.5 L5.5 5.5 L0.5 5.5 Z" fill="#595959" stroke="#262626" stroke-width="1" stroke-linejoin="miter"/></svg><i class="hd" style="left:40px;width:3px"></i><svg class="ic" style="left:43px" width="16" height="16" viewBox="0 0 16 16"><use href="#i-folder"/></svg><span class="tx" style="left:64px">Флаги комплектации</span></div>
<div class="row" style="top:48px"><i class="hd" style="left:52px;width:12px"></i><svg class="ic" style="left:65px" width="16" height="16" viewBox="0 0 16 16"><use href="#i-num"/></svg><span class="tx" style="left:84px">Комплектация датчиком фаз</span></div>
<div class="row" style="top:64px"><i class="hd" style="left:52px;width:12px"></i><svg class="ic" style="left:65px" width="16" height="16" viewBox="0 0 16 16"><use href="#i-num"/></svg><span class="tx" style="left:84px">Комплектация датчиком детонации</span></div>
<div class="row" style="top:80px"><i class="hd" style="left:52px;width:12px"></i><svg class="ic" style="left:65px" width="16" height="16" viewBox="0 0 16 16"><use href="#i-num"/></svg><span class="tx" style="left:84px">Комплектация датчиком неровной дороги</span></div>
<div class="row" style="top:96px"><i class="hd" style="left:52px;width:12px"></i><svg class="ic" style="left:65px" width="16" height="16" viewBox="0 0 16 16"><use href="#i-num"/></svg><span class="tx" style="left:84px">Конфигурация ДАД</span></div>
<div class="row" style="top:112px"><i class="hd" style="left:52px;width:12px"></i><svg class="ic" style="left:65px" width="16" height="16" viewBox="0 0 16 16"><use href="#i-num"/></svg><span class="tx" style="left:84px">Конфигурация ДМРВ</span></div>
<div class="row" style="top:128px"><svg class="arr" style="left:30px" width="6" height="6" viewBox="0 0 6 6"><path d="M5.5 0.5 L5.5 5.5 L0.5 5.5 Z" fill="#595959" stroke="#262626" stroke-width="1" stroke-linejoin="miter"/></svg><i class="hd" style="left:40px;width:3px"></i><svg class="ic" style="left:43px" width="16" height="16" viewBox="0 0 16 16"><use href="#i-folder"/></svg><span class="tx lt3" style="left:64px">Маска DTC</span></div>
<div class="row" style="top:144px"><i class="hd" style="left:52px;width:12px"></i><svg class="ic" style="left:64px" width="16" height="16" viewBox="0 0 16 16"><use href="#i-chk"/></svg><span class="tx lt" style="left:84px">P0005,P0006</span></div>
<div class="row" style="top:160px"><i class="hd" style="left:52px;width:12px"></i><svg class="ic" style="left:64px" width="16" height="16" viewBox="0 0 16 16"><use href="#i-chk"/></svg><span class="tx lt" style="left:84px">P0101,P0101,P0102,P0103</span></div>
<div class="row" style="top:176px"><i class="hd" style="left:52px;width:12px"></i><svg class="ic" style="left:64px" width="16" height="16" viewBox="0 0 16 16"><use href="#i-chk"/></svg><span class="tx lt" style="left:84px">P0106,P0107,P0108</span></div>
<div class="row" style="top:192px"><i class="hd" style="left:52px;width:12px"></i><svg class="ic" style="left:64px" width="16" height="16" viewBox="0 0 16 16"><use href="#i-chk"/></svg><span class="tx lt" style="left:84px">P0112,P0113</span></div>
<div class="row" style="top:208px"><i class="hd" style="left:52px;width:12px"></i><svg class="ic" style="left:64px" width="16" height="16" viewBox="0 0 16 16"><use href="#i-chk"/></svg><span class="tx lt" style="left:84px">P0116,P0116,P0117,P0118,P0217</span></div>
<div class="row" style="top:224px"><i class="hd" style="left:52px;width:12px"></i><svg class="ic" style="left:64px" width="16" height="16" viewBox="0 0 16 16"><use href="#i-chk"/></svg><span class="tx lt" style="left:84px">P0116,P0117,P0118</span></div>
<div class="row" style="top:240px"><i class="hd" style="left:52px;width:12px"></i><svg class="ic" style="left:64px" width="16" height="16" viewBox="0 0 16 16"><use href="#i-chk"/></svg><span class="tx lt" style="left:84px">P0122,P0123</span></div>
<div class="row" style="top:256px"><i class="hd" style="left:52px;width:12px"></i><svg class="ic" style="left:64px" width="16" height="16" viewBox="0 0 16 16"><use href="#i-chk"/></svg><span class="tx lt" style="left:84px">P0122,P0123,P0222,P0223,P0606,P2135,P2</span></div>
<div class="row" style="top:272px"><i class="hd" style="left:52px;width:12px"></i><svg class="ic" style="left:64px" width="16" height="16" viewBox="0 0 16 16"><use href="#i-chk"/></svg><span class="tx lt" style="left:84px">P0130,P0130,P0131,P0132,P0133,P0134</span></div>
<div class="row" style="top:288px"><i class="hd" style="left:52px;width:12px"></i><svg class="ic" style="left:64px" width="16" height="16" viewBox="0 0 16 16"><use href="#i-chk"/></svg><span class="tx lt" style="left:84px">P0135,P0135,P0135</span></div>
<div class="row" style="top:304px"><i class="hd" style="left:52px;width:12px"></i><svg class="ic" style="left:64px" width="16" height="16" viewBox="0 0 16 16"><use href="#i-chk"/></svg><span class="tx lt" style="left:84px">P0136,P0136,P0137,P0138,P0139,P0140</span></div>
<div class="row" style="top:320px"><i class="hd" style="left:52px;width:12px"></i><svg class="ic" style="left:64px" width="16" height="16" viewBox="0 0 16 16"><use href="#i-chk"/></svg><span class="tx lt" style="left:84px">P0141,P0141,P0141</span></div>
<div class="row" style="top:336px"><i class="hd" style="left:52px;width:12px"></i><svg class="ic" style="left:64px" width="16" height="16" viewBox="0 0 16 16"><use href="#i-chk"/></svg><span class="tx lt" style="left:84px">P0171,P0172</span></div>
<div class="row" style="top:352px"><i class="hd" style="left:52px;width:12px"></i><svg class="ic" style="left:64px" width="16" height="16" viewBox="0 0 16 16"><use href="#i-chk"/></svg><span class="tx lt" style="left:84px">P0182,P0183</span></div>
<div class="row" style="top:368px"><i class="hd" style="left:52px;width:12px"></i><svg class="ic" style="left:64px" width="16" height="16" viewBox="0 0 16 16"><use href="#i-chk"/></svg><span class="tx lt" style="left:84px">P0192,P0193</span></div>
<div class="row" style="top:384px"><i class="hd" style="left:52px;width:12px"></i><svg class="ic" style="left:64px" width="16" height="16" viewBox="0 0 16 16"><use href="#i-chk"/></svg><span class="tx lt" style="left:84px">P0201,P0261,P0262</span></div>
<div class="row" style="top:400px"><i class="hd" style="left:52px;width:12px"></i><svg class="ic" style="left:64px" width="16" height="16" viewBox="0 0 16 16"><use href="#i-chk"/></svg><span class="tx lt" style="left:84px">P0202,P0264,P0265</span></div>
<div class="row" style="top:416px"><i class="hd" style="left:52px;width:12px"></i><svg class="ic" style="left:64px" width="16" height="16" viewBox="0 0 16 16"><use href="#i-chk"/></svg><span class="tx lt" style="left:84px">P0203,P0267,P0268</span></div>
<div class="row" style="top:432px"><i class="hd" style="left:52px;width:12px"></i><svg class="ic" style="left:64px" width="16" height="16" viewBox="0 0 16 16"><use href="#i-chk"/></svg><span class="tx lt" style="left:84px">P0204,P0270,P0271</span></div>
<div class="row" style="top:448px"><i class="hd" style="left:52px;width:12px"></i><svg class="ic" style="left:64px" width="16" height="16" viewBox="0 0 16 16"><use href="#i-chk"/></svg><span class="tx lt" style="left:84px">P0300,P0301,P0302,P0303,P0304</span></div>
<div class="row" style="top:464px"><i class="hd" style="left:52px;width:12px"></i><svg class="ic" style="left:64px" width="16" height="16" viewBox="0 0 16 16"><use href="#i-chk"/></svg><span class="tx lt" style="left:84px">P0300,P0301,P0302,P0303,P0304 #1</span></div>
<div class="row" style="top:480px"><i class="hd" style="left:52px;width:12px"></i><svg class="ic" style="left:64px" width="16" height="16" viewBox="0 0 16 16"><use href="#i-chk"/></svg><span class="tx lt" style="left:84px">P0327</span></div>
<div class="row" style="top:496px"><i class="hd" style="left:52px;width:12px"></i><svg class="ic" style="left:64px" width="16" height="16" viewBox="0 0 16 16"><use href="#i-chk"/></svg><span class="tx lt" style="left:84px">P0335,P0336</span></div>
<div class="row" style="top:512px"><i class="hd" style="left:52px;width:12px"></i><svg class="ic" style="left:64px" width="16" height="16" viewBox="0 0 16 16"><use href="#i-chk"/></svg><span class="tx lt" style="left:84px">P0341,P0341,P0342,P0343</span></div>
<div class="row" style="top:528px"><i class="hd" style="left:52px;width:12px"></i><svg class="ic" style="left:64px" width="16" height="16" viewBox="0 0 16 16"><use href="#i-chk"/></svg><span class="tx lt" style="left:84px"></span></div>
      </div>
      <div id="vsb">
       <svg class="abs" style="left:6px;top:7px" width="7" height="4"><path d="M0 4 L3.5 0 L7 4Z" fill="#444"/></svg>
       <div class="thumb" style="left:1px;top:18px;width:15px;height:19px"><i class="abs" style="left:3px;top:5px;width:7px;height:8px;background:repeating-linear-gradient(180deg,#5f5f5f 0,#5f5f5f 1px,#fdfdfd 1px,#fdfdfd 2px,transparent 2px,transparent 3px)"></i></div>
       <svg class="abs" style="left:6px;top:521px" width="7" height="4"><path d="M0 0 L3.5 4 L7 0Z" fill="#444"/></svg>
      </div>
      <div id="hsb">
       <svg class="abs" style="left:6px;top:5px" width="4" height="7"><path d="M4 0 L0 3.5 L4 7Z" fill="#444"/></svg>
       <div class="thumbh" style="left:19px;top:1px;width:155px;height:15px"><i class="abs" style="left:73px;top:3px;width:8px;height:7px;background:repeating-linear-gradient(90deg,#5f5f5f 0,#5f5f5f 1px,#fdfdfd 1px,#fdfdfd 2px,transparent 2px,transparent 3px)"></i></div>
       <svg class="abs" style="left:289px;top:5px" width="4" height="7"><path d="M0 0 L4 3.5 L0 7Z" fill="#444"/></svg>
      </div>
      <div id="scorner"></div>
     </div>
    </div>
    <div id="search"><span>Поиск калибровки</span><i></i></div>
   </div>
   <div id="rhead"><svg class="abs" style="left:3px;top:3px" width="3" height="16"><g fill="#fff"><rect x="1" y="1" width="2" height="2"/><rect x="1" y="5" width="2" height="2"/><rect x="1" y="9" width="2" height="2"/><rect x="1" y="13" width="2" height="2"/></g><g fill="#000"><rect x="0" y="0" width="2" height="2"/><rect x="0" y="4" width="2" height="2"/><rect x="0" y="8" width="2" height="2"/><rect x="0" y="12" width="2" height="2"/></g></svg></div>
   <div id="main">
    <div class="lbl" style="top:21px">Версия калибровок</div><div class="inp" style="top:18px">UE0900101</div>
    <div class="lbl" style="top:51px;letter-spacing:.17px">Код контроллера заказчика</div><div class="inp" style="top:48px;letter-spacing:0">9867.3763001-01</div>
    <div class="lbl" style="top:81px;letter-spacing:-.35px">Версия ПО</div><div class="inp" style="top:78px">9001_01</div>
    <div class="lbl" style="top:111px">Код ПО производителя</div><div class="inp" style="top:108px">421601012</div>
    <div class="lbl" style="top:141px;letter-spacing:.13px">Код контроллера</div><div class="inp" style="top:138px;letter-spacing:0">9867.3763001-01</div>
    <div class="lbl" style="top:171px;letter-spacing:.13px">Тип двигателя</div><div class="inp" style="top:168px">UMZ 421647</div>
    <div class="lbl" style="top:201px">Нормы токсичности</div><div class="inp" style="top:198px">EURO-4</div>
   </div>
  </div>
  <div id="status">
   <span style="left:5px;letter-spacing:-.05px">Микас-12</span><i class="ssep" style="left:199px"></i><span style="left:203px;letter-spacing:-.8px">9001_01</span><i class="ssep" style="left:350px"></i>
   <svg class="abs" style="left:994px;top:5px" width="12" height="13"><g fill="#bfd2f1"><rect x="9" y="2" width="2" height="2"/><rect x="5" y="6" width="2" height="2"/><rect x="9" y="6" width="2" height="2"/><rect x="1" y="10" width="2" height="2"/><rect x="5" y="10" width="2" height="2"/><rect x="9" y="10" width="2" height="2"/></g><g fill="#7da2df"><rect x="8" y="1" width="2" height="2"/><rect x="4" y="5" width="2" height="2"/><rect x="8" y="5" width="2" height="2"/><rect x="0" y="9" width="2" height="2"/><rect x="4" y="9" width="2" height="2"/><rect x="8" y="9" width="2" height="2"/></g></svg>
  </div>
 </div>
</div>
</body>
</html>
